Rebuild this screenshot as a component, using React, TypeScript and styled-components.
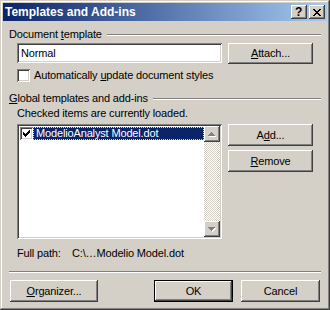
import React from "react";
import styled, { createGlobalStyle, css } from "styled-components";

const Global = createGlobalStyle`
  html, body { margin: 0; padding: 0; background: #D4D0C8; }
  * { box-sizing: border-box; }
`;

const raised = css`
  background: #D4D0C8;
  box-shadow: inset -1px -1px #404040, inset 1px 1px #fff, inset -2px -2px #808080, inset 2px 2px #D4D0C8;
`;

const sunken = css`
  box-shadow: inset 1px 1px #808080, inset -1px -1px #fff, inset 2px 2px #404040, inset -2px -2px #D4D0C8;
`;

const Win = styled.div`
  width: 330px;
  height: 310px;
  padding: 3px;
  background: #D4D0C8;
  box-shadow: inset -1px -1px #404040, inset 1px 1px #D4D0C8, inset -2px -2px #808080, inset 2px 2px #fff;
  display: flex;
  flex-direction: column;
  font-family: "Liberation Sans", Arial, sans-serif;
  font-size: 11px;
  letter-spacing: -0.15px;
  color: #000;
`;

const TitleBar = styled.div`
  height: 18px;
  background: linear-gradient(to right, #0A246A, #A6CAF0);
  display: flex;
  align-items: center;
  padding: 0 2px;
`;

const TitleText = styled.div`
  flex: 1;
  color: #fff;
  font-weight: bold;
  font-size: 12px;
  letter-spacing: 0;
  line-height: 18px;
  white-space: nowrap;
`;

const CapButtons = styled.div`
  display: flex;
  gap: 2px;
`;

const CapButton = styled.div`
  ${raised};
  width: 16px;
  height: 14px;
  display: flex;
  align-items: center;
  justify-content: center;
  font-weight: bold;
  font-size: 12px;
  line-height: 14px;
  padding-right: 1px;
`;

const Body = styled.div`
  display: flex;
  flex-direction: column;
  padding: 0 6px;
`;

const LegendRow = styled.div<{ $top: number }>`
  margin-top: ${(p) => p.$top}px;
  height: 13px;
  display: flex;
  align-items: center;
  line-height: 13px;
  white-space: nowrap;
`;

const Etch = styled.div`
  flex: 1;
  height: 2px;
  margin-left: 5px;
  border-top: 1px solid #808080;
  border-bottom: 1px solid #fff;
`;

const Row = styled.div<{ $top: number }>`
  margin-top: ${(p) => p.$top}px;
  padding-left: 8px;
  display: flex;
  align-items: flex-start;
  gap: 6px;
`;

const TextField = styled.div`
  ${sunken};
  background: #fff;
  width: 205px;
  height: 20px;
  padding: 3px 4px;
  line-height: 14px;
`;

const Button = styled.div<{ $w?: number; $h?: number; $default?: boolean }>`
  ${raised};
  width: ${(p) => p.$w ?? 85}px;
  height: ${(p) => p.$h ?? 22}px;
  display: flex;
  align-items: center;
  justify-content: center;
  line-height: 13px;
  white-space: nowrap;
  ${(p) =>
    p.$default &&
    css`
      border: 1px solid #000;
      box-shadow: inset -1px -1px #404040, inset 1px 1px #fff, inset -2px -2px #808080;
    `}
`;

const CheckLine = styled.div<{ $top: number }>`
  margin-top: ${(p) => p.$top}px;
  padding-left: 8px;
  display: flex;
  align-items: center;
  gap: 4px;
  height: 13px;
  line-height: 13px;
  white-space: nowrap;
`;

const CheckBox = styled.div`
  ${sunken};
  background: #fff;
  width: 13px;
  height: 13px;
  flex: none;
  position: relative;
`;

const Note = styled.div<{ $top: number }>`
  margin-top: ${(p) => p.$top}px;
  padding-left: 8px;
  height: 13px;
  line-height: 13px;
  white-space: nowrap;
  display: flex;
`;

const PathLabel = styled.span`
  width: 55px;
`;

const ListBox = styled.div`
  ${sunken};
  background: #fff;
  width: 205px;
  height: 115px;
  padding: 2px;
  display: flex;
`;

const Items = styled.div`
  flex: 1;
  display: flex;
  flex-direction: column;
  padding-top: 1px;
`;

const Item = styled.div`
  display: flex;
  align-items: center;
  height: 13px;
  padding-left: 1px;
`;

const ItemText = styled.div<{ $selected?: boolean }>`
  flex: 1;
  height: 13px;
  line-height: 11px;
  padding-left: 2px;
  white-space: nowrap;
  background: ${(p) => (p.$selected ? "#0A246A" : "transparent")};
  color: ${(p) => (p.$selected ? "#fff" : "#000")};
  border: 1px dotted ${(p) => (p.$selected ? "#F5DB95" : "transparent")};
`;

const ScrollBar = styled.div`
  width: 16px;
  display: flex;
  flex-direction: column;
`;

const ScrollBtn = styled.div`
  ${raised};
  width: 16px;
  height: 16px;
  display: flex;
  align-items: center;
  justify-content: center;
`;

const Track = styled.div`
  flex: 1;
  background: repeating-conic-gradient(#fff 0 25%, #D4D0C8 0 50%) 0 0 / 2px 2px;
`;

const ButtonCol = styled.div`
  display: flex;
  flex-direction: column;
  gap: 4px;
`;

const Separator = styled.div<{ $top: number }>`
  margin-top: ${(p) => p.$top}px;
  height: 2px;
  border-top: 1px solid #808080;
  border-bottom: 1px solid #fff;
`;

const Footer = styled.div`
  margin-top: 7px;
  display: flex;
  padding: 0 1px;
`;

const Spacer = styled.div`
  flex: 1;
`;

const FooterRight = styled.div`
  display: flex;
  gap: 8px;
`;

function Pixels({ rows, color, shadow, w, h }: { rows: string[]; color: string; shadow?: string; w: number; h: number }) {
  const cells: React.ReactNode[] = [];
  rows.forEach((r, y) =>
    r.split("").forEach((c, x) => {
      if (c === "x") {
        if (shadow) cells.push(<rect key={`s${x}-${y}`} x={x + 1} y={y + 1} width={1} height={1} fill={shadow} />);
      }
    })
  );
  rows.forEach((r, y) =>
    r.split("").forEach((c, x) => {
      if (c === "x") cells.push(<rect key={`c${x}-${y}`} x={x} y={y} width={1} height={1} fill={color} />);
    })
  );
  return (
    <svg width={w} height={h} viewBox={`0 0 ${w} ${h}`} shapeRendering="crispEdges" style={{ display: "block" }}>
      {cells}
    </svg>
  );
}

const closeX = ["xx....xx", ".xx..xx.", "..xxxx..", "...xx...", "..xxxx..", ".xx..xx.", "xx....xx"];
const upArrow = ["...x...", "..xxx..", ".xxxxx.", "xxxxxxx"];
const downArrow = ["xxxxxxx", ".xxxxx.", "..xxx..", "...x..."];
const check = [
  ".......",
  "......x",
  ".....xx",
  "x...xxx",
  "xx.xxx.",
  "xxxxx..",
  ".xxx...",
  "..x....",
];

function Check({ checked }: { checked?: boolean }) {
  return (
    <CheckBox>
      {checked && (
        <div style={{ position: "absolute", left: 3, top: 2 }}>
          <Pixels rows={check} color="#000" w={7} h={8} />
        </div>
      )}
    </CheckBox>
  );
}

export default function App() {
  return (
    <>
      <Global />
      <Win>
        <TitleBar>
          <TitleText>Templates and Add-ins</TitleText>
          <CapButtons>
            <CapButton>?</CapButton>
            <CapButton>
              <Pixels rows={closeX} color="#000" w={8} h={7} />
            </CapButton>
          </CapButtons>
        </TitleBar>
        <Body>
          <LegendRow $top={7}>
            <span>
              Document <u>t</u>emplate
            </span>
            <Etch />
          </LegendRow>
          <Row $top={2}>
            <TextField>Normal</TextField>
            <Button $h={21}>
              <span>
                <u>A</u>ttach...
              </span>
            </Button>
          </Row>
          <CheckLine $top={5}>
            <Check />
            <span>
              Automatically <u>u</u>pdate document styles
            </span>
          </CheckLine>
          <LegendRow $top={10}>
            <span>
              <u>G</u>lobal templates and add-ins
            </span>
            <Etch />
          </LegendRow>
          <Note $top={2}>Checked items are currently loaded.</Note>
          <Row $top={4}>
            <ListBox>
              <Items>
                <Item>
                  <Check checked />
                  <ItemText $selected>ModelioAnalyst Model.dot</ItemText>
                </Item>
              </Items>
              <ScrollBar>
                <ScrollBtn>
                  <Pixels rows={upArrow} color="#808080" shadow="#fff" w={8} h={5} />
                </ScrollBtn>
                <Track />
                <ScrollBtn>
                  <Pixels rows={downArrow} color="#808080" shadow="#fff" w={8} h={5} />
                </ScrollBtn>
              </ScrollBar>
            </ListBox>
            <ButtonCol>
              <Button>
                <span>
                  A<u>d</u>d...
                </span>
              </Button>
              <Button>
                <span>
                  <u>R</u>emove
                </span>
              </Button>
            </ButtonCol>
          </Row>
          <Note $top={8}>
            <PathLabel>Full path:</PathLabel>
            <span>C:\…Modelio Model.dot</span>
          </Note>
          <Separator $top={11} />
          <Footer>
            <Button $w={88}>
              <span>
                <u>O</u>rganizer...
              </span>
            </Button>
            <Spacer />
            <FooterRight>
              <Button $w={79} $default>
                OK
              </Button>
              <Button $w={79}>Cancel</Button>
            </FooterRight>
          </Footer>
        </Body>
      </Win>
    </>
  );
}
